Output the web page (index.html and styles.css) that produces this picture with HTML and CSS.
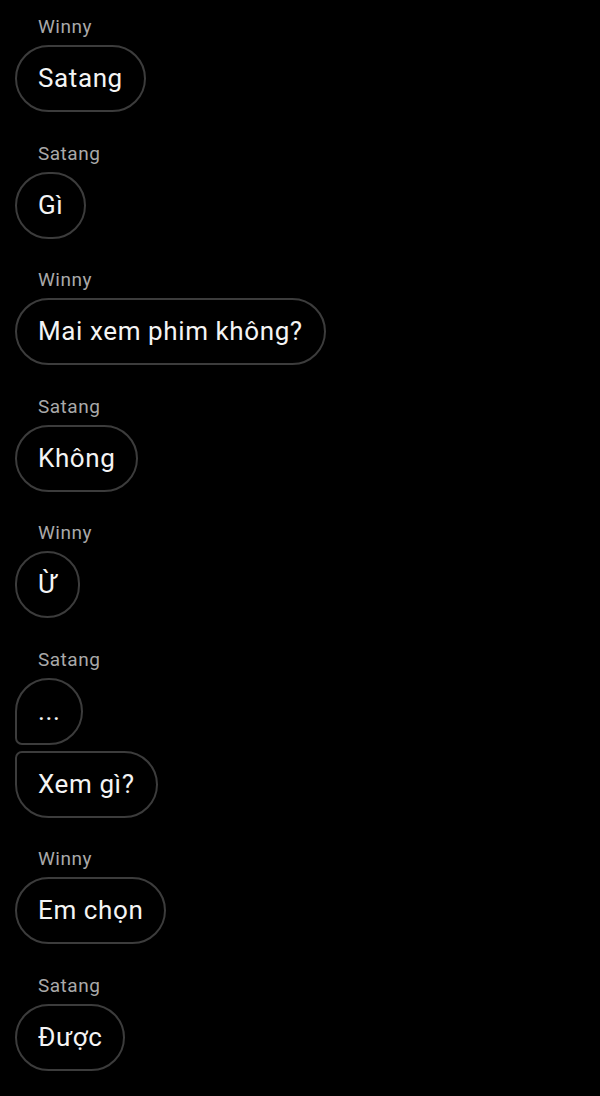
FILE: index.html
```html
<!DOCTYPE html>
<html lang="vi">
<head>
    <meta charset="UTF-8">
    <meta name="viewport" content="width=device-width, initial-scale=1.0">
    <title>Chat</title>
<link rel="stylesheet" href="styles.css">
</head>
<body>

<main class="chat">
    <section class="group">
        <div class="name">Winny</div>
        <div class="bubble">Satang</div>
    </section>

    <section class="group">
        <div class="name">Satang</div>
        <div class="bubble">Gì</div>
    </section>

    <section class="group">
        <div class="name">Winny</div>
        <div class="bubble">Mai xem phim không?</div>
    </section>

    <section class="group">
        <div class="name">Satang</div>
        <div class="bubble">Không</div>
    </section>

    <section class="group">
        <div class="name">Winny</div>
        <div class="bubble">Ừ</div>
    </section>

    <section class="group">
        <div class="name">Satang</div>
        <div class="bubble first">...</div>
        <div class="bubble last">Xem gì?</div>
    </section>

    <section class="group">
        <div class="name">Winny</div>
        <div class="bubble">Em chọn</div>
    </section>

    <section class="group">
        <div class="name">Satang</div>
        <div class="bubble">Được</div>
    </section>
</main>

</body>
</html>
```

FILE: styles.css
```css
body {
  margin: 0;
  background-color: #000;
  font-family: 'Roboto', 'Noto Sans', sans-serif;
  color: #f4f4f4;
}

.chat {
  display: flex;
  flex-direction: column;
  gap: 30.5px;
  padding: 16px 15px 0 15px;
}

.group {
  display: flex;
  flex-direction: column;
  align-items: flex-start;
  gap: 6px;
}

.name {
  padding-left: 23px;
  margin-bottom: 1px;
  font-size: 19px;
  line-height: 22px;
  letter-spacing: 0.5px;
  color: #a9a9a9;
}

.bubble {
  border: 2px solid #3c3c3c;
  border-radius: 34px;
  padding: 16px 21px;
  font-size: 26px;
  line-height: 31px;
  letter-spacing: 0.6px;
}

.bubble.first {
  border-bottom-left-radius: 7px;
}

.bubble.last {
  border-top-left-radius: 7px;
}
```
